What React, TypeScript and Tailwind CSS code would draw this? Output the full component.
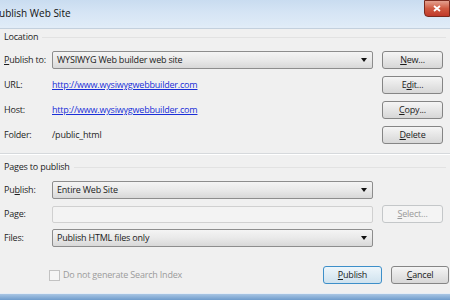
const FONT = { fontFamily: '"Open Sans", "Noto Sans", sans-serif' }

function Combo({ value }: { value: string }) {
  return (
    <div className="w-[321px] h-[18px] flex items-center justify-between pl-[4px] pr-[5px] rounded-[2px] border border-[#8d8d8d] bg-gradient-to-b from-[#f4f4f4] via-[#e9e9e9] to-[#d8d8d8] text-[#1b1b1b]">
      <span>{value}</span>
      <svg width="6" height="4" viewBox="0 0 6 4">
        <path d="M0 0 L6 0 L3 4 Z" fill="#111" />
      </svg>
    </div>
  )
}

function Btn({ label, u, disabled, focused, w = 'w-[61px]' }: { label: string; u: number; disabled?: boolean; focused?: boolean; w?: string }) {
  const txt = (
    <>
      {label.slice(0, u)}
      <span className="underline">{label[u]}</span>
      {label.slice(u + 1)}
    </>
  )
  if (disabled) {
    return (
      <div className={`${w} h-[18px] flex items-center justify-center rounded-[3px] border border-[#c4c7c9] bg-[#f4f4f4] text-[#9a9a9a]`}>
        {txt}
      </div>
    )
  }
  return (
    <div
      className={`${w} h-[18px] flex items-center justify-center rounded-[3px] border ${
        focused ? 'border-[#3d8fc9] from-[#eef6fb] to-[#cfe2ee]' : 'border-[#858585] from-[#f5f5f5] to-[#d7d7d7]'
      } bg-gradient-to-b text-[#1b1b1b]`}
    >
      {txt}
    </div>
  )
}

function Label({ text, u }: { text: string; u?: number }) {
  return (
    <div className="w-[48px] text-[#1e1e1e]">
      {u === undefined ? (
        text
      ) : (
        <>
          {text.slice(0, u)}
          <span className="underline">{text[u]}</span>
          {text.slice(u + 1)}
        </>
      )}
    </div>
  )
}

function Header({ text }: { text: string }) {
  return (
    <div className="h-[16px] flex items-center gap-[4px] text-[#1e1e1e]">
      <span>{text}</span>
      <div className="flex-1 h-px bg-[#e2e2e2]" />
    </div>
  )
}

export default function App() {
  return (
    <div className="w-[450px] h-[300px] overflow-hidden flex flex-col bg-[#f0f0f0] text-[9px] tracking-[-0.2px]" style={FONT}>
      {/* title bar */}
      <div className="h-[26px] shrink-0 relative flex items-center bg-gradient-to-b from-[#c9dcf0] via-[#d6e5f5] to-[#dfebf7]">
        <span className="ml-[-7px] text-[10px] text-[#111] tracking-[0px]">Publish Web Site</span>
        <div className="absolute right-0 top-0 w-[26px] h-[17px] rounded-bl-[4px] border border-[#7a2a1e] bg-gradient-to-b from-[#e3a08f] via-[#cf5a41] to-[#c0392b] flex items-center justify-center">
          <svg width="8" height="7" viewBox="0 0 8 7">
            <path d="M1 1 L7 6 M7 1 L1 6" stroke="#fff" strokeWidth="1.8" />
          </svg>
        </div>
      </div>
      <div className="h-[2px] shrink-0 bg-[#e1ecf7]" />
      <div className="h-px shrink-0 bg-[#c3d0dd]" />

      {/* client */}
      <div className="flex-1 flex flex-col px-[4px]">
        <Header text="Location" />
        <div className="mt-[6px] flex flex-col gap-[7px]">
          <div className="flex items-center h-[18px]">
            <Label text="Publish to:" u={0} />
            <Combo value="WYSIWYG Web builder web site" />
            <div className="ml-[9px]"><Btn label="New..." u={0} /></div>
          </div>
          <div className="flex items-center h-[18px]">
            <Label text="URL:" />
            <span className="w-[321px] text-[#1a2fd8] underline">http://www.wysiwygwebbuilder.com</span>
            <div className="ml-[9px]"><Btn label="Edit..." u={1} /></div>
          </div>
          <div className="flex items-center h-[18px]">
            <Label text="Host:" />
            <span className="w-[321px] text-[#1a2fd8] underline">http://www.wysiwygwebbuilder.com</span>
            <div className="ml-[9px]"><Btn label="Copy..." u={0} /></div>
          </div>
          <div className="flex items-center h-[18px]">
            <Label text="Folder:" />
            <span className="w-[321px] text-[#1e1e1e]">/public_html</span>
            <div className="ml-[9px]"><Btn label="Delete" u={0} /></div>
          </div>
        </div>

        <div className="mt-[9px] mx-[-4px] h-px bg-[#d6d9dc]" />
        <div className="mx-[-4px] h-px bg-white" />

        <div className="mt-[4px]">
          <Header text="Pages to publish" />
        </div>
        <div className="mt-[6px] flex flex-col gap-[6px]">
          <div className="flex items-center h-[18px]">
            <Label text="Publish:" u={2} />
            <Combo value="Entire Web Site" />
          </div>
          <div className="flex items-center h-[18px]">
            <Label text="Page:" />
            <div className="w-[321px] h-[17px] border border-[#d0d0d0] rounded-[2px] bg-[#f3f3f3]" />
            <div className="ml-[9px]"><Btn label="Select..." u={0} disabled /></div>
          </div>
          <div className="flex items-center h-[18px]">
            <Label text="Files:" />
            <Combo value="Publish HTML files only" />
          </div>
        </div>

        <div className="mt-[19px] flex items-center h-[18px]">
          <div className="ml-[45px] w-[11px] h-[11px] border border-[#c2c2c2] bg-[#f5f5f5]" />
          <span className="ml-[3px] text-[#9b9b9b]">Do not generate Search Index</span>
          <div className="flex-1" />
          <Btn label="Publish" u={0} focused w="w-[59px]" />
          <div className="ml-[9px] mr-[-3px]"><Btn label="Cancel" u={0} w="w-[58px]" /></div>
        </div>
      </div>

      {/* bottom frame */}
      <div className="h-px shrink-0 bg-[#e6edf5]" />
      <div className="h-[6px] shrink-0 bg-gradient-to-b from-[#a9c6e4] to-[#6f9ccc]" />
    </div>
  )
}
